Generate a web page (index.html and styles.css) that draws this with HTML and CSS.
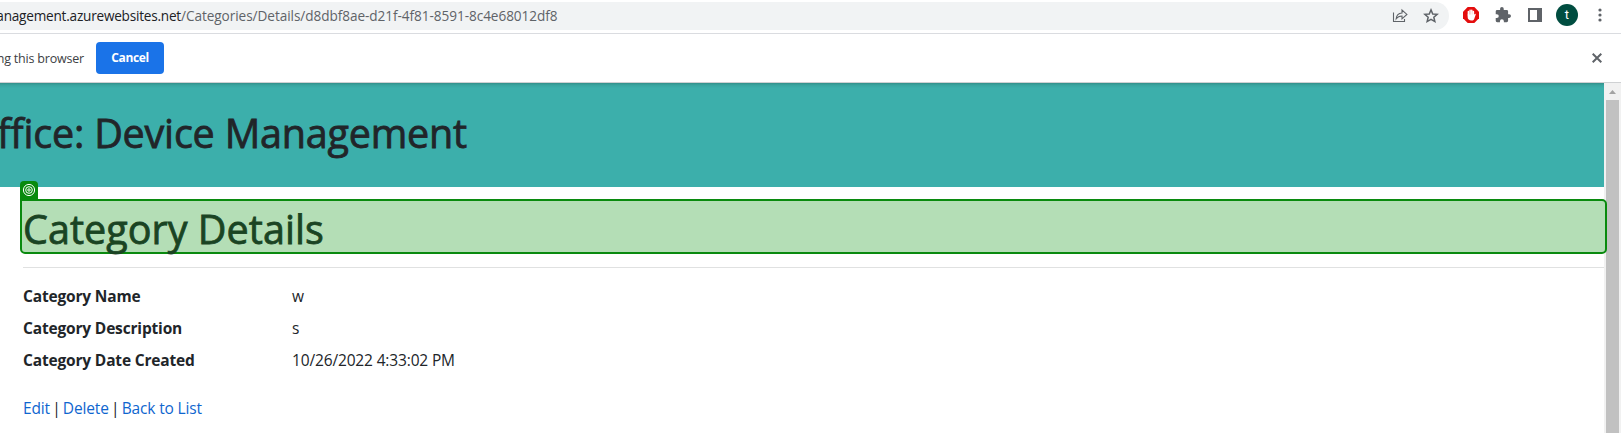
FILE: index.html
```
<!DOCTYPE html>
<html lang="en">
<head>
<meta charset="utf-8">
<title>Category Details</title>
<link rel="stylesheet" href="styles.css">
</head>
<body>
<div class="toolbar">
  <div class="address">
    <div class="url"><span class="host"><span>anagement.azurewebsites.net</span></span><span class="path">/Categories/Details/d8dbf8ae-d21f-4f81-8591-8c4e68012df8</span></div>
    <svg class="share" width="16" height="16" viewBox="0 0 16 16" fill="none" stroke="#5f6368" stroke-width="1.1"><path d="M1.5 4.5v9h11v-2.500M4.200 10.800c.3-3.700 2.300-5.600 5.800-5.800V2l4.900 4.400-4.900 4.400V8c-2.700 0-4.500.9-5.800 2.800z"/></svg>
    <svg class="star" width="16" height="16" viewBox="0 0 16 16" fill="none" stroke="#5f6368" stroke-width="1.500"><path d="M8 1.900l1.750 4.050 4.400.4-3.320 2.900 1 4.300L8 11.250l-3.830 2.300 1-4.300-3.320-2.900 4.400-.4z"/></svg>
  </div>
  <svg class="blocker" width="16" height="16" viewBox="0 0 16 16"><path fill="#e40d0d" d="M4.700 0h6.600L16 4.700v6.600L11.300 16H4.700L0 11.300V4.700z"/><g stroke="#fff" stroke-width="1.500" stroke-linecap="round"><path d="M5.400 8V4.600M7.100 8V3.300M8.800 8V3.300M10.400 8V4.600"/></g><path fill="#fff" d="M4.650 7.500h6.500l.8-.6c.5-.2 1 .1.8.6L11.200 12c-.5 1-1.300 1.500-2.600 1.500-2.600 0-3.950-1.300-3.950-3.400z"/></svg>
  <svg class="puzzle" width="16" height="16" viewBox="0 0 22 22"><path fill="#5f6368" d="M19.500 10H18V6a2 2 0 0 0-2-2h-4V2.500a2.500 2.500 0 0 0-5 0V4H3a2 2 0 0 0-2 2v3.800h1.500a2.700 2.700 0 0 1 0 5.400H1V19a2 2 0 0 0 2 2h3.800v-1.500a2.700 2.700 0 0 1 5.400 0V21H16a2 2 0 0 0 2-2v-4h1.500a2.500 2.500 0 0 0 0-5z"/></svg>
  <svg class="panel" width="14" height="14" viewBox="0 0 14 14"><path fill="#5f6368" fill-rule="evenodd" d="M0 0h14v14H0zM2 2v10h7V2z"/></svg>
  <div class="avatar">t</div>
  <svg class="more" width="4" height="14" viewBox="0 0 4 14" fill="#5f6368"><circle cx="2" cy="2" r="1.600"/><circle cx="2" cy="7" r="1.600"/><circle cx="2" cy="12" r="1.600"/></svg>
</div>
<div class="infobar">
  <span class="message">ng this browser</span>
  <button class="cancel">Cancel</button>
  <svg class="close" width="10" height="10" viewBox="0 0 10 10" stroke="#5f6368" stroke-width="2"><path d="M.7.7l8.600 8.600M9.300.7L.7 9.300"/></svg>
</div>
<div class="viewport">
  <div class="page">
    <header class="banner"><span class="site-title">ffice: Device Management</span></header>
    <main>
      <h1 class="heading"><span class="badge"><svg width="14" height="14" viewBox="0 0 14 14" fill="none" stroke="#fff"><circle cx="7" cy="7" r="5.600"/><circle cx="7" cy="7" r="3.300"/><circle cx="7" cy="7" r="1.200"/></svg></span><span class="heading-text">Category Details</span></h1>
      <hr>
      <dl>
        <dt>Category Name</dt><dd>w</dd>
        <dt>Category Description</dt><dd>s</dd>
        <dt>Category Date Created</dt><dd>10/26/2022 4:33:02 PM</dd>
      </dl>
      <div class="links"><a>Edit</a> | <a>Delete</a> | <a>Back to List</a></div>
    </main>
  </div>
  <div class="scrollbar"><svg width="17" height="17" viewBox="0 0 17 17"><path fill="#a3a3a3" d="M5 11h7L8.500 7z"/></svg><div class="thumb"></div></div>
</div>
</body>
</html>
```
FILE: styles.css
```
* { box-sizing: border-box; }
body { margin: 0; width: 1621px; height: 433px; overflow: hidden; background: #fff; color: #212529; font-family: "Open Sans", "Noto Sans", sans-serif; }
svg { display: block; flex: none; }
.toolbar { display: flex; align-items: center; height: 34px; padding-bottom: 3px; border-bottom: 1px solid #dadce0; white-space: nowrap; }
.address { display: flex; align-items: center; width: 1449px; height: 28px; margin-top: 1px; background: #f1f3f4; border-radius: 0 14px 14px 0; }
.url { display: flex; flex: 1; font-size: 13.600px; line-height: 28px; color: #5f6368; }
.host { display: flex; justify-content: flex-end; width: 181px; color: #202124; letter-spacing: -.22px; }
.path { letter-spacing: -.06px; }
.share { margin-right: 15px; }
.star { margin-right: 10px; }
.blocker { margin-left: 14px; }
.puzzle { margin-left: 16px; }
.panel { margin-left: 17px; }
.avatar { width: 22px; height: 22px; margin-left: 14px; border-radius: 50%; background: #004d40; color: #fff; font: 13px/22px Roboto, sans-serif; text-align: center; }
.more { margin-left: 20px; }
.infobar { display: flex; align-items: center; height: 49px; border-bottom: 1px solid #cfd1d3; font-size: 12.500px; }
.message { display: flex; justify-content: flex-end; width: 84px; white-space: nowrap; color: #3c4043; letter-spacing: -.2px; }
.cancel { width: 68px; height: 32px; margin-left: 12px; padding: 0; border: 0; border-radius: 4px; background: #1a73e8; color: #fff; font: 700 12px/32px "Open Sans", sans-serif; letter-spacing: -.35px; }
.close { margin-left: auto; margin-right: 19px; }
.viewport { display: flex; height: 350px; }
.page { width: 1604px; }
.banner { display: flex; height: 104px; background: linear-gradient(#338f8a 0, #38a49f 2px, #3cafab 5px); }
.site-title { display: flex; justify-content: flex-end; width: 467px; font-size: 39.500px; font-weight: 500; line-height: 100px; white-space: nowrap; letter-spacing: -.2px; -webkit-text-stroke: .8px #212529; }
main { padding-top: 12px; font-size: 15.500px; }
.heading { position: relative; width: 1587px; height: 55px; margin: 0 0 0 20px; padding-left: 1px; border: 2px solid #098a0e; border-radius: 0 5px 5px 5px; background: #b4deb6; color: #1a4423; font-size: 39.500px; font-weight: 500; line-height: 56px; letter-spacing: .04px; }
.heading-text { -webkit-text-stroke: .8px #1a4423; }
.badge { position: absolute; left: -2px; top: -20px; display: flex; justify-content: center; width: 18px; height: 20px; padding-top: 2px; border-radius: 4px 4px 0 0; background: #098a0e; }
hr { margin: 13px 0 12px 23px; border: 0; border-top: 1px solid #e0e1e1; }
dl { display: grid; grid-template-columns: 269px 1fr; grid-auto-rows: 32px; margin: 0 0 0 23px; line-height: 32px; }
dt { font-weight: 700; letter-spacing: -.17px; }
dd { margin: 0; letter-spacing: -.15px; }
.links { margin: 16px 0 0 23px; line-height: 32px; letter-spacing: -.15px; word-spacing: -1.600px; }
.links a { color: #0f66cf; word-spacing: 0; }
.scrollbar { width: 17px; background: #f1f1f1; }
.thumb { width: 13px; height: 333px; margin-left: 2px; background: #c1c1c1; }
```
